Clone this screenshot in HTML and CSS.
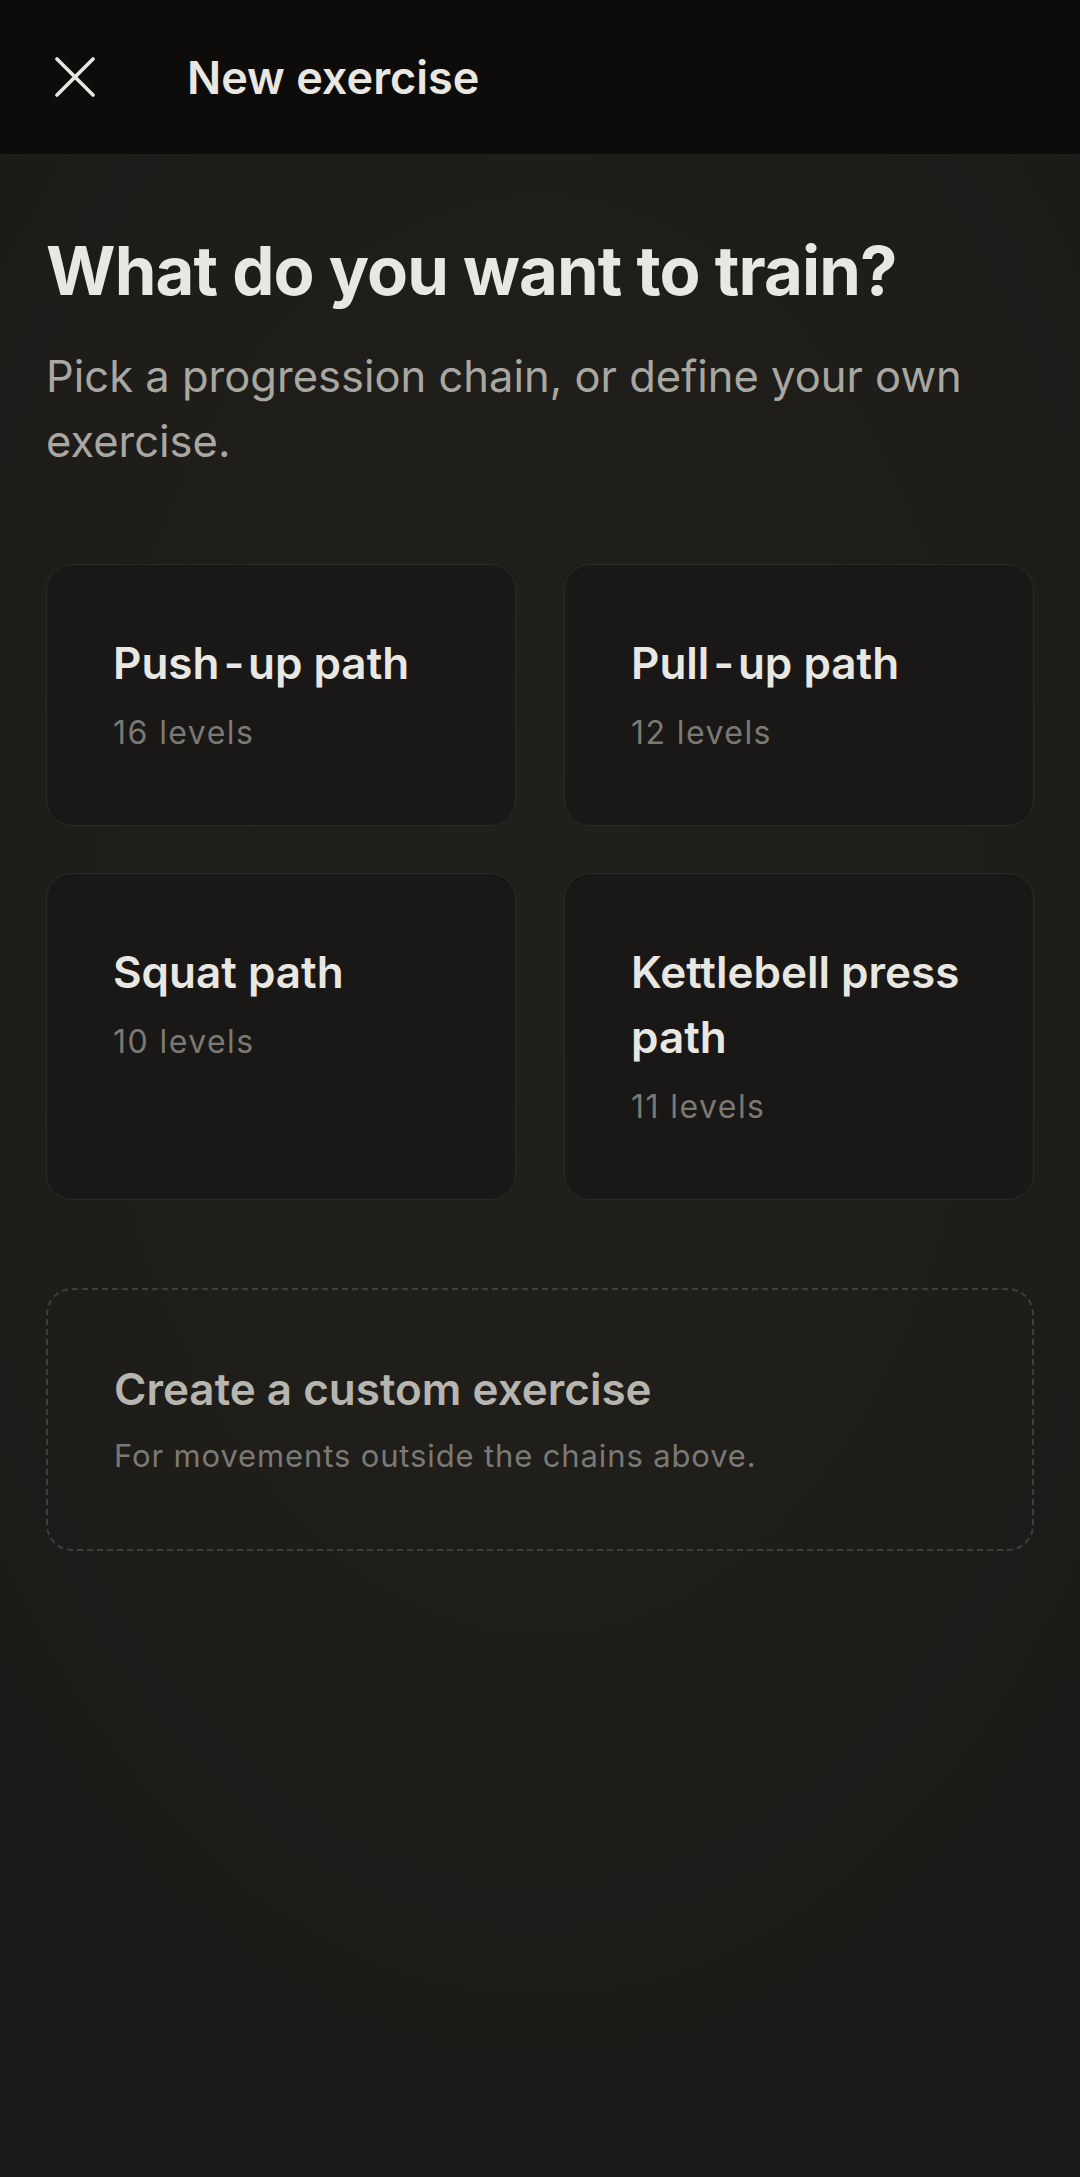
FILE: index.html
```
<!DOCTYPE html>
<html lang="en">
<head>
<meta charset="utf-8">
<title>New exercise</title>
<link rel="stylesheet" href="styles.css">
</head>
<body>
  <header class="topbar">
    <button class="close-btn" aria-label="Close">
      <svg viewBox="0 0 40 40" width="40" height="40" aria-hidden="true">
        <path d="M2 2 L38 38 M38 2 L2 38" stroke="#e9e7e2" stroke-width="3.6" stroke-linecap="round" fill="none"/>
      </svg>
    </button>
    <h1 class="topbar-title">New exercise</h1>
  </header>

  <main class="content">
    <h2 class="headline">What do you want to train?</h2>
    <p class="lede">Pick a progression chain, or define your own exercise.</p>

    <section class="chains">
      <a class="chain-card" href="#">
        <span class="chain-name">Push<span class="dash">&#8209;</span>up path</span>
        <span class="chain-meta">16 levels</span>
      </a>
      <a class="chain-card" href="#">
        <span class="chain-name">Pull<span class="dash">&#8209;</span>up path</span>
        <span class="chain-meta">12 levels</span>
      </a>
      <a class="chain-card" href="#">
        <span class="chain-name">Squat path</span>
        <span class="chain-meta">10 levels</span>
      </a>
      <a class="chain-card" href="#">
        <span class="chain-name">Kettlebell press path</span>
        <span class="chain-meta">11 levels</span>
      </a>
    </section>

    <a class="custom-card" href="#">
      <span class="custom-name">Create a custom exercise</span>
      <span class="custom-meta">For movements outside the chains above.</span>
    </a>
  </main>
</body>
</html>
```
FILE: styles.css
```
* {
  box-sizing: border-box;
}

html,
body {
  margin: 0;
  padding: 0;
}

body {
  min-height: 2177px;
  font-family: Inter, "Noto Sans", "Liberation Sans", sans-serif;
  color: #e9e7e2;
  background-color: #1d1c19;
  background-image: radial-gradient(ellipse 75% 60% at 50% 42%, #201f1b 0%, #1f1e1a 45%, #1b1a18 100%);
}

/* Top bar */
.topbar {
  height: 154px;
  background: #0d0c0b;
  display: flex;
  align-items: center;
  padding-left: 55px;
}

.close-btn {
  width: 40px;
  height: 40px;
  padding: 0;
  border: 0;
  background: none;
  display: flex;
  align-items: center;
  justify-content: center;
  cursor: pointer;
}

.close-btn svg {
  width: 40px;
  height: 40px;
}

.topbar-title {
  margin: 0 0 0 92px;
  font-size: 45px;
  font-weight: 600;
  letter-spacing: 0;
  color: #e9e7e2;
}

/* Main column */
.content {
  padding: 77px 46px 0;
}

.headline {
  margin: 0;
  font-size: 67px;
  line-height: 79px;
  font-weight: 700;
  letter-spacing: -0.013em;
  color: #e9e7e2;
}

.lede {
  margin: 34px 0 0;
  font-size: 43.5px;
  line-height: 65px;
  font-weight: 400;
  color: #a9a7a1;
}

/* Progression chains */
.chains {
  margin-top: 90px;
  display: grid;
  grid-template-columns: 1fr 1fr;
  gap: 47px 48px;
}

.chain-card {
  display: flex;
  flex-direction: column;
  padding: 66px 66px 65px;
  border: 1.5px solid #2b2a27;
  border-radius: 26px;
  background: #191816;
  text-decoration: none;
}

.chain-name {
  font-size: 44px;
  line-height: 65px;
  font-weight: 600;
  color: #e9e7e2;
}

/* the hyphen in chain names sits a little apart from its words */
.dash {
  margin: 0 5px;
}

.chain-meta {
  margin-top: 10px;
  font-size: 32px;
  line-height: 54px;
  font-weight: 400;
  letter-spacing: 0.045em;
  color: #7b7974;
}

/* Custom exercise */
.custom-card {
  display: flex;
  flex-direction: column;
  margin-top: 88px;
  padding: 67px 66px 66px;
  border: 2px dashed #403e3a;
  border-radius: 26px;
  text-decoration: none;
}

.custom-name {
  font-size: 44px;
  line-height: 65px;
  font-weight: 600;
  color: #b7b5af;
}

.custom-meta {
  margin-top: 7px;
  font-size: 31px;
  line-height: 54px;
  font-weight: 400;
  letter-spacing: 0.028em;
  color: #7b7974;
}
```
